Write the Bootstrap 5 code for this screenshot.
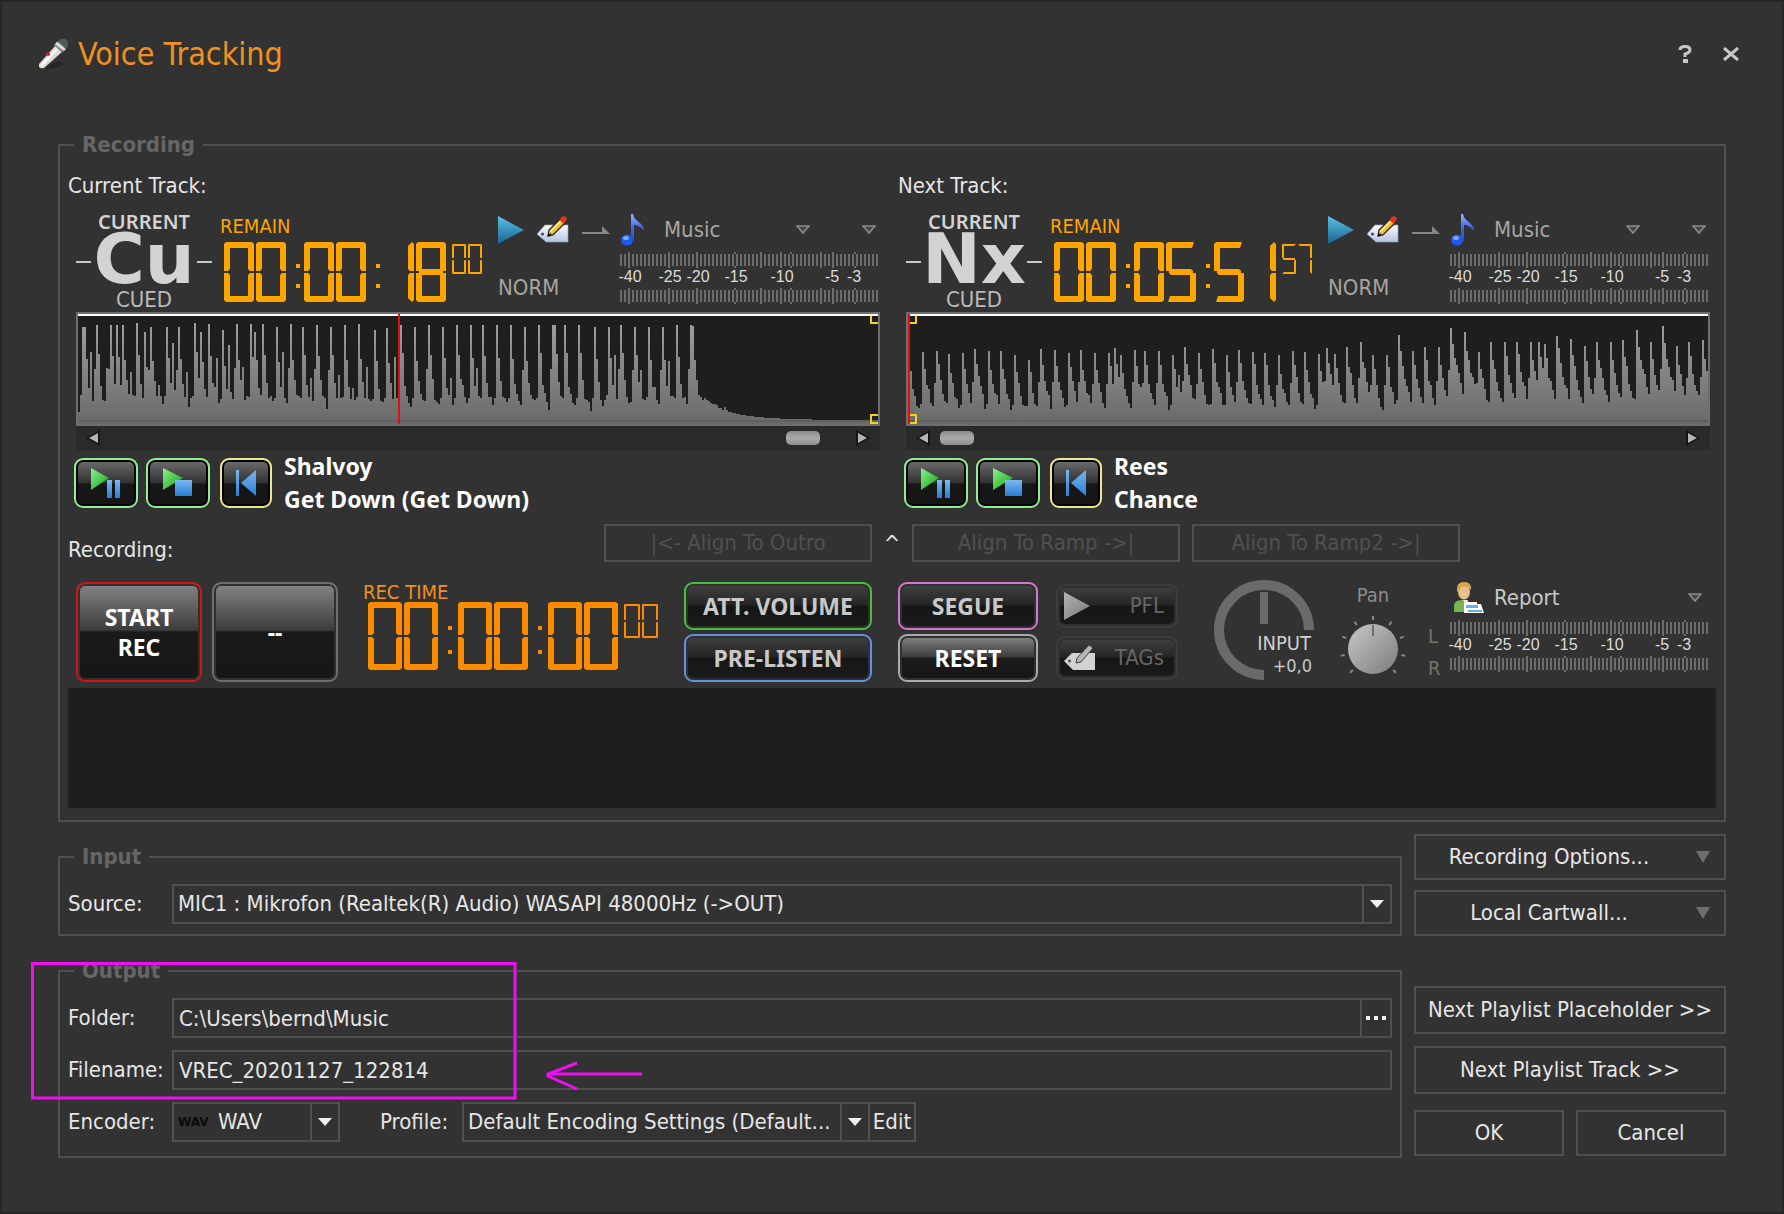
<!DOCTYPE html>
<html lang="en" data-bs-theme="dark">
<head>
<meta charset="utf-8">
<meta name="viewport" content="width=device-width, initial-scale=1">
<title>Voice Tracking</title>
<link href="https://cdn.jsdelivr.net/npm/bootstrap@5.3.0/dist/css/bootstrap.min.css" rel="stylesheet">
<style>
  :root { --line: #505050; --amber: #ffa500; --rec: #ff8c00; --ui: "DejaVu Sans Condensed", "DejaVu Sans", sans-serif; --ui-bold: "Noto Sans", "Open Sans", sans-serif; }
  body { background: #323232; color: #e6e6e6; font-family: var(--ui); font-size: 22px; line-height: 28px; }
  .window { min-height: 100vh; border: 2px solid #262626; }
  .titlebar { padding: 32px 41px 57px 36px; }
  .titlebar h1 { font-size: 32px; line-height: 40px; color: #f09020; margin: 0 0 0 8px; font-weight: 400; }
  .titlebar button { background: none; border: 0; padding: 0; width: 20px; height: 24px; line-height: 0; }
  .titlebar-tools { gap: 26px; }
  .window-body { padding: 0 56px; }
  .frame { border: 2px solid var(--line); padding: 0 8px; min-width: 0; }
  .frame legend { float: none; width: auto; margin: 0 0 0 6px; padding: 0 8px; font-size: 22px; line-height: 28px; height: 28px; font-weight: 700; color: #666; }
  .plain { background: transparent; border: 2px solid var(--line); color: #e6e6e6; border-radius: 0; padding: 0 10px; font-size: 22px; }
  .plain:disabled { color: #505050; opacity: 1; }
  /* deck */
  .decks { gap: 12px; padding-top: 13px; }
  .deck { flex: 1 1 0; min-width: 0; }
  .deck-inner { padding: 10px 6px 0 8px; }
  .deck-head { height: 102px; padding-top: 2px; }
  .slot { width: 136px; color: #d3d3d3; text-align: center; }
  .slot-top { font: 600 20px/20px var(--ui-bold); }
  .slot-id { font: 700 70px/54px "DejaVu Sans", sans-serif; height: 54px; }
  .slot-id::before, .slot-id::after { content: ""; height: 2px; width: 15px; background: #c8c8c8; margin-top: 6px; }
  .slot-state { line-height: 28px; color: #bbb; }
  .clock-label { font-size: 20px; line-height: 20px; color: var(--amber); }
  .clock { margin-left: 8px; width: 264px; padding-top: 4px; }
  .clock svg, .rec-clock svg { display: block; }
  .clock svg { fill: var(--amber); margin: 6px 0 0 4px; }
  .tools { margin-left: 14px; width: 112px; padding-top: 2px; }
  .mode { margin-top: 28px; }
  .muted { color: #a6a6a0; }
  .category { width: 260px; }
  .deck .category { padding-top: 2px; }
  .row32 { height: 32px; }
  .flat-select { appearance: none; background: transparent; border: 0; padding: 0; color: inherit; font-size: 22px; line-height: 28px; outline: 0; }
  .pick { display: grid; align-items: center; }
  .pick > * { grid-area: 1 / 1; }
  .pick > svg { justify-self: end; pointer-events: none; }
  .deck .pick { margin-left: 18px; }
  .icon-btn { background: none; border: 0; padding: 0; line-height: 0; }
  .more { margin: 0 4px 0 52px; }
  .meter { overflow: visible; }
  .wave { height: 114px; border: 2px solid #6e6e6e; background: #1e1e1e; }
  .wave svg { display: block; width: 100%; height: 110px; }
  .scroll { height: 24px; background: #2a2a2a; padding: 0 10px; }
  .thumb { width: 34px; height: 14px; border-radius: 5px; background: linear-gradient(#8a8a8a, #aaa 50%, #8a8a8a); }
  .thumb-end { margin: 0 36px 0 auto; }
  .thumb-start { margin: 0 auto 0 10px; }
  .transport { margin: 8px -2px 0; gap: 8px; }
  .glossy { border: 2px solid var(--edge, #777); border-radius: 9px; padding: 0; color: #fff; font: 700 23px/30px var(--ui-bold);
    background: linear-gradient(#858585, #3c3c3c 48%, #1a1a1a 50%, #161616); box-shadow: inset 0 0 0 2px #303030; }
  .glossy.dim { color: #c8c8c8; background: linear-gradient(#424242, #242424 48%, #161616 50%, #1a1a1a); }
  .glossy.soft { color: #666; font: 400 22px/28px var(--ui); height: 44px; margin: 2px 0; padding: 0 12px 0 6px; }
  .glossy.player { width: 64px; height: 50px; line-height: 0; background: linear-gradient(#6e6e6e, #303030 50%, #161616 52%, #161616); box-shadow: inset 0 0 0 2px #000; }
  .glossy.narrow { width: 52px; margin-left: 2px; }
  .edge-mint { --edge: #90ee90; } .edge-khaki { --edge: #f0e68c; } .edge-red { --edge: #d21414; } .edge-green { --edge: #46c03c; }
  .edge-blue { --edge: #6490dc; } .edge-pink { --edge: #d278cd; } .edge-grey { --edge: #aaa; } .edge-mid { --edge: #6e6e6e; } .edge-low { --edge: #3c3c3c; }
  .song { font: 700 23px/33px var(--ui-bold); color: #fff; margin: -8px 0 -8px 4px; }
  .align-row { margin-top: 16px; height: 38px; }
  .align-row .plain { width: 268px; height: 38px; padding: 0; }
  .align-row .caret { width: 40px; padding-top: 6px; text-align: center; }
  .align-label { width: 536px; line-height: 24px; }
  .second { margin-left: 12px; }
  .console { margin-top: 20px; height: 100px; padding: 0 6px 0 8px; }
  .big { width: 126px; height: 100px; margin-right: 10px; padding: 0 20px; }
  .rec-clock { margin: 0 26px 0 15px; width: 295px; }
  .rec-clock svg { fill: var(--rec); margin-left: 5px; }
  .rec-clock .clock-label { color: #f09020; }
  .stack { gap: 4px; }
  .stack .glossy { height: 48px; }
  .stack .glossy.soft { height: 44px; }
  .w-a { width: 188px; margin-right: 26px; } .w-b { width: 140px; margin-right: 18px; } .w-c { width: 122px; }
  .dial { margin: -4px 0 0 36px; }
  .pan { margin-left: 18px; }
  .report { width: 282px; color: #c8c8c8; }
  .channels { width: 22px; color: #74746a; font-size: 20px; line-height: 32px; padding-top: 38px; }
  .wavebox { margin-top: 6px; height: 120px; background: #1e1e1e; margin-bottom: 12px; }
  /* lower part */
  .lower { margin-top: 12px; gap: 12px; }
  .forms { padding-top: 9px; min-width: 0; }
  .frame-input { padding-bottom: 10px; }
  .fields { padding-top: 13px; gap: 12px; }
  .side { width: 312px; }
  .side .plain { height: 46px; }
  .side .tall { height: 48px; }
  .side-next { margin-top: 50px; }
  .side-row { margin-top: 12px; }
  .side-last { margin-top: 16px; gap: 12px; }
  .options { margin-top: 10px; }
  .field-label { width: 104px; }
  .combo { display: grid; border: 2px solid var(--line); height: 40px; min-width: 0; }
  .combo > * { grid-area: 1 / 1; min-width: 0; }
  .combo select { appearance: none; background: transparent; border: 0; color: #e6e6e6; padding: 0 34px 0 4px; font-size: 22px; line-height: 28px; outline: 0; text-overflow: ellipsis; }
  .combo .chev { justify-self: end; width: 28px; border-left: 2px solid var(--line); pointer-events: none; display: grid; place-items: center; }
  .combo-encoder { width: 168px; }
  .combo-encoder select { padding-left: 44px; }
  .combo-profile { width: 408px; }
  .profile-label { margin-left: 40px; width: 82px; }
  .line-input { background: transparent; border: 2px solid var(--line); height: 40px; color: #e6e6e6; padding: 0 5px; min-width: 0; outline: 0; font-size: 22px; }
  .tail { height: 40px; padding: 0; margin-left: -2px; }
  .browse { width: 32px; line-height: 0; }
  .edit { width: 48px; }
  .wav-tag { font: 700 12px/36px "DejaVu Sans", sans-serif; color: #0a0a0a; padding-left: 4px; pointer-events: none; }
  .output { position: relative; margin-top: 21px; padding-bottom: 14px; }
  .annot { position: absolute; pointer-events: none; left: -29px; top: -23px; }
</style>
</head>
<body>
<svg width="0" height="0" class="position-absolute" aria-hidden="true">
  <defs>
    <linearGradient id="gPlay" x1="0" y1="0" x2="0" y2="1"><stop offset="0" stop-color="#5cc0e8"/><stop offset="1" stop-color="#17648c"/></linearGradient>
    <linearGradient id="gGreen" x1="0" y1="0" x2="1" y2="1"><stop offset="0" stop-color="#8cf08c"/><stop offset="1" stop-color="#14a014"/></linearGradient>
    <linearGradient id="gBlue" x1="0" y1="0" x2="0" y2="1"><stop offset="0" stop-color="#7ab8f0"/><stop offset="1" stop-color="#2a7fd6"/></linearGradient>
    <linearGradient id="gTag" x1="0" y1="0" x2="0" y2="1"><stop offset="0" stop-color="#fff"/><stop offset="1" stop-color="#b4c3e0"/></linearGradient>
    <linearGradient id="gNote" x1="0" y1="0" x2="0" y2="1"><stop offset="0" stop-color="#9ab4ff"/><stop offset=".5" stop-color="#4068e0"/><stop offset="1" stop-color="#1a50e0"/></linearGradient>
    <linearGradient id="gKnob" x1="0" y1="0" x2="1" y2="1"><stop offset="0" stop-color="#c8c8c8"/><stop offset="1" stop-color="#7c7c7c"/></linearGradient>
    <linearGradient id="gGrey" x1="0" y1="0" x2="1" y2="1"><stop offset="0" stop-color="#b4b4b4"/><stop offset="1" stop-color="#787878"/></linearGradient>
    <linearGradient id="gWave" x1="0" y1="0" x2="0" y2="110" gradientUnits="userSpaceOnUse"><stop offset="0" stop-color="#a2a2a2"/><stop offset="1" stop-color="#696969"/></linearGradient>
    <symbol id="i-play" viewBox="0 0 26 28"><path d="M0 0 26 14 0 28z" fill="url(#gPlay)"/></symbol>
    <symbol id="i-tag" viewBox="0 0 32 28"><path d="M0 18 8 9H31V26H9z" fill="url(#gTag)" stroke="#8c9cc0" stroke-width=".7"/><circle cx="5.500" cy="18" r="1.500" fill="#445"/><path d="M11 20 12 14 23 3 28 7 16 19z" fill="#f0c030" stroke="#222" stroke-width="1.300"/><path d="M13 16 24 5" stroke="#fff0a0" stroke-width="1.500"/><path d="M22 4 25 1Q29-1 30 3L27 8z" fill="#e03818"/><path d="M11 20 14 18" stroke="#111" stroke-width="2"/></symbol>
    <symbol id="i-arrow" viewBox="0 0 28 10"><path d="M0 9V7H20V1L28 9z" fill="#868686"/></symbol>
    <symbol id="i-note" viewBox="0 0 24 32"><ellipse cx="6" cy="26" rx="6" ry="5.500" fill="#1f58ea"/><ellipse cx="5" cy="24" rx="3" ry="2" fill="#78a8ff"/><path d="M10 27V0H12C13 8 23 8 23 17 20 12 15 11 13 11V27z" fill="url(#gNote)"/></symbol>
    <symbol id="i-drop" viewBox="0 0 14 10"><path d="M1 1H13L7 8z" fill="#4a4a4a" stroke="#8c8c8c" stroke-width="1.500"/></symbol>
    <symbol id="i-left" viewBox="0 0 14 16"><path d="M14 0V16L0 8z" fill="#141414"/><path d="M12 3V13L3 8z" fill="#b4b4b4"/></symbol>
    <symbol id="i-right" viewBox="0 0 14 16"><path d="M0 0V16L14 8z" fill="#141414"/><path d="M2 3V13L11 8z" fill="#b4b4b4"/></symbol>
    <symbol id="i-playpause" viewBox="0 0 32 34"><path d="M1 2 19 12 1 24z" fill="url(#gGreen)"/><path d="M17 14h5v18h-5zM25 14h5v18h-5z" fill="url(#gBlue)"/></symbol>
    <symbol id="i-playstop" viewBox="0 0 32 34"><path d="M1 2 21 12 1 24z" fill="url(#gGreen)"/><path d="M13 14h17v16H13z" fill="url(#gBlue)"/></symbol>
    <symbol id="i-start" viewBox="0 0 22 26"><path d="M1 0h3v26H1zM21 0v26L6 13z" fill="url(#gBlue)"/></symbol>
    <symbol id="i-chev" viewBox="0 0 14 8"><path d="M0 0H14L7 8z" fill="#f0f0f0"/></symbol>
  </defs>
</svg>

<div class="window d-flex flex-column">
  <header class="titlebar d-flex align-items-center">
    <svg width="32" height="34" viewBox="0 0 32 34" aria-hidden="true">
      <path d="M6 31Q20 32 27 27L20 24z" fill="#1c1c1c" opacity=".6"/>
      <path d="M1 27 17 9 24 15 6 31Q3 32 1 30z" fill="#dcdcd4"/><path d="M3 29 19 12" stroke="#fff" stroke-width="2"/>
      <path d="M16 8 20 4 28 11 25 15z" fill="#9aa0a0"/><path d="M18 6 27 13" stroke="#e8e8e8" stroke-width="2"/>
      <path d="M20 4Q24 0 29 3 32 8 28 12z" fill="#50585a"/><circle cx="10" cy="17" r="2" fill="#d02020"/>
    </svg>
    <h1>Voice Tracking</h1>
    <div class="titlebar-tools d-flex ms-auto">
      <button type="button" aria-label="Help"><svg width="14" height="18" viewBox="0 0 14 18"><path d="M2 5Q2 1.500 7 1.500T12 5Q12 7.500 7 9V12" fill="none" stroke="#c8c8c8" stroke-width="3"/><path d="M5 14h5v4H5z" fill="#c8c8c8"/></svg></button>
      <button type="button" aria-label="Close"><svg width="18" height="14" viewBox="0 0 18 14"><path d="M2 1 16 13M16 1 2 13" stroke="#c8c8c8" stroke-width="3"/></svg></button>
    </div>
  </header>

  <main class="window-body">
    <fieldset class="frame">
      <legend>Recording</legend>
      <div class="decks d-flex">
        <section class="deck">
          <div>Current Track:</div>
          <div class="deck-inner">
            <div class="deck-head d-flex">
              <div class="slot">
                <div class="slot-top">CURRENT</div>
                <div class="slot-id d-flex align-items-center justify-content-between">Cu</div>
                <div class="slot-state">CUED</div>
              </div>
              <div class="clock"><div class="clock-label">REMAIN</div><svg role="img" data-seg="00:00: 1800" data-w="30" data-h="60"></svg></div>
              <div class="tools">
                <div class="row32 d-flex align-items-center">
                  <button class="icon-btn" type="button" aria-label="Play"><svg width="26" height="28"><use href="#i-play"/></svg></button>
                  <button class="icon-btn ms-auto" type="button" aria-label="Edit tags"><svg width="32" height="28"><use href="#i-tag"/></svg></button>
                  <svg class="ms-auto" width="28" height="10"><use href="#i-arrow"/></svg>
                </div>
                <div class="mode muted">NORM</div>
              </div>
              <div class="category ms-auto">
                <div class="row32 d-flex align-items-center">
                  <svg width="26" height="32"><use href="#i-note"/></svg>
                  <label class="pick flex-fill muted"><select class="flat-select w-100" aria-label="Category"><option>Music</option></select><svg width="14" height="10"><use href="#i-drop"/></svg></label>
                  <button class="icon-btn more" type="button" aria-label="More"><svg width="14" height="10"><use href="#i-drop"/></svg></button>
                </div>
                <svg class="meter d-block" width="260" height="58"></svg>
              </div>
            </div>
            <div class="wave"><svg data-wave="a" viewBox="0 0 800 110" preserveAspectRatio="none"></svg></div>
            <div class="scroll d-flex align-items-center">
              <svg width="14" height="16"><use href="#i-left"/></svg><span class="thumb thumb-end"></span><svg width="14" height="16"><use href="#i-right"/></svg>
            </div>
            <div class="transport d-flex">
              <button class="glossy player edge-mint" type="button" aria-label="Play / pause"><svg width="32" height="34"><use href="#i-playpause"/></svg></button>
              <button class="glossy player edge-mint" type="button" aria-label="Play / stop"><svg width="32" height="34"><use href="#i-playstop"/></svg></button>
              <button class="glossy player narrow edge-khaki" type="button" aria-label="Back to start"><svg width="22" height="26"><use href="#i-start"/></svg></button>
              <div class="song">Shalvoy<br>Get Down (Get Down)</div>
            </div>
          </div>
        </section>
        <section class="deck">
          <div>Next Track:</div>
          <div class="deck-inner">
            <div class="deck-head d-flex">
              <div class="slot">
                <div class="slot-top">CURRENT</div>
                <div class="slot-id d-flex align-items-center justify-content-between">Nx</div>
                <div class="slot-state">CUED</div>
              </div>
              <div class="clock"><div class="clock-label">REMAIN</div><svg role="img" data-seg="00:05:5157" data-w="30" data-h="60"></svg></div>
              <div class="tools">
                <div class="row32 d-flex align-items-center">
                  <button class="icon-btn" type="button" aria-label="Play"><svg width="26" height="28"><use href="#i-play"/></svg></button>
                  <button class="icon-btn ms-auto" type="button" aria-label="Edit tags"><svg width="32" height="28"><use href="#i-tag"/></svg></button>
                  <svg class="ms-auto" width="28" height="10"><use href="#i-arrow"/></svg>
                </div>
                <div class="mode muted">NORM</div>
              </div>
              <div class="category ms-auto">
                <div class="row32 d-flex align-items-center">
                  <svg width="26" height="32"><use href="#i-note"/></svg>
                  <label class="pick flex-fill muted"><select class="flat-select w-100" aria-label="Category"><option>Music</option></select><svg width="14" height="10"><use href="#i-drop"/></svg></label>
                  <button class="icon-btn more" type="button" aria-label="More"><svg width="14" height="10"><use href="#i-drop"/></svg></button>
                </div>
                <svg class="meter d-block" width="260" height="58"></svg>
              </div>
            </div>
            <div class="wave"><svg data-wave="b" viewBox="0 0 800 110" preserveAspectRatio="none"></svg></div>
            <div class="scroll d-flex align-items-center">
              <svg width="14" height="16"><use href="#i-left"/></svg><span class="thumb thumb-start"></span><svg width="14" height="16"><use href="#i-right"/></svg>
            </div>
            <div class="transport d-flex">
              <button class="glossy player edge-mint" type="button" aria-label="Play / pause"><svg width="32" height="34"><use href="#i-playpause"/></svg></button>
              <button class="glossy player edge-mint" type="button" aria-label="Play / stop"><svg width="32" height="34"><use href="#i-playstop"/></svg></button>
              <button class="glossy player narrow edge-khaki" type="button" aria-label="Back to start"><svg width="22" height="26"><use href="#i-start"/></svg></button>
              <div class="song">Rees<br>Chance</div>
            </div>
          </div>
        </section>
      </div>

      <div class="align-row d-flex">
        <div class="align-label align-self-end">Recording:</div>
        <button class="plain" type="button" disabled>|&lt;- Align To Outro</button>
        <div class="caret">^</div>
        <button class="plain" type="button" disabled>Align To Ramp -&gt;|</button>
        <button class="plain second" type="button" disabled>Align To Ramp2 -&gt;|</button>
      </div>

      <div class="console d-flex">
        <button class="glossy big edge-red" type="button">START REC</button>
        <button class="glossy big edge-mid" type="button">--</button>
        <div class="rec-clock"><div class="clock-label">REC TIME</div><svg role="img" data-seg="00:00:0000" data-w="34" data-h="68"></svg></div>
        <div class="stack w-a d-flex flex-column">
          <button class="glossy dim edge-green" type="button">ATT. VOLUME</button>
          <button class="glossy dim edge-blue" type="button">PRE-LISTEN</button>
        </div>
        <div class="stack w-b d-flex flex-column">
          <button class="glossy dim edge-pink" type="button">SEGUE</button>
          <button class="glossy edge-grey" type="button">RESET</button>
        </div>
        <div class="stack w-c d-flex flex-column">
          <button class="glossy dim soft edge-low d-flex align-items-center justify-content-between" type="button"><svg width="26" height="28" viewBox="0 0 26 28"><path d="M0 0 26 14 0 28z" fill="url(#gGrey)"/></svg>PFL</button>
          <button class="glossy dim soft edge-low d-flex align-items-center justify-content-between" type="button"><svg width="32" height="28" viewBox="0 0 32 28"><path d="M0 17 8 9H31V26H9z" fill="#d2d2d2"/><path d="M12 19 13 14 25 1 29 4 17 18z" fill="#b4b4b4" stroke="#444"/><circle cx="5.500" cy="17" r="1.500" fill="#555"/></svg>TAGs</button>
        </div>
        <svg class="dial" width="104" height="104" viewBox="0 0 104 104">
          <path d="M95 52A45 45 0 1 0 50 97" fill="none" stroke="#6a6a6a" stroke-width="10"/><path d="M50 14V46" stroke="#6a6a6a" stroke-width="8"/>
          <text x="97" y="72" text-anchor="end" font-size="20" fill="#d0d0d0">INPUT</text><text x="98" y="94" text-anchor="end" font-size="18" fill="#c8c8c8">+0,0</text>
        </svg>
        <svg class="pan" width="74" height="100" viewBox="0 0 74 100">
          <text x="37" y="20" text-anchor="middle" font-size="20" fill="#8c8c8c">Pan</text>
          <g id="panTicks" stroke="#8a8a8a" stroke-width="2"></g>
          <circle cx="37" cy="67" r="25" fill="url(#gKnob)"/><path d="M37 43V54" stroke="#6e6e6e" stroke-width="2"/>
        </svg>
        <div class="report ms-auto d-flex">
          <div class="channels d-flex flex-column"><span>L</span><span>R</span></div>
          <div class="category">
            <div class="row32 d-flex align-items-center">
              <svg width="36" height="32" viewBox="0 0 36 32"><path d="M4 30V24Q4 18 12 18T22 24V30z" fill="#78b450"/><path d="M13 18 16 23 18 18z" fill="#eee"/><ellipse cx="14" cy="9.500" rx="6" ry="8" fill="#e8c090"/><path d="M7 9Q6 0 14 0T21 8Q18 4 12 5 9 6 9 11z" fill="#d0a850"/><path d="M14 20H27V22H31L34 31H14z" fill="#fff"/><path d="M16 23H28V26H16zM18 28H32V30H18z" fill="#6aaee0"/></svg>
              <label class="pick flex-fill ms-2"><select class="flat-select w-100" aria-label="Report"><option>Report</option></select><svg width="14" height="10" class="me-2"><use href="#i-drop"/></svg></label>
            </div>
            <svg class="meter d-block" width="260" height="58"></svg>
          </div>
        </div>
      </div>
      <div class="wavebox"></div>
    </fieldset>

    <div class="lower d-flex">
      <div class="forms flex-fill">
        <fieldset class="frame frame-input">
          <legend>Input</legend>
          <div class="fields d-flex flex-column">
            <div class="d-flex align-items-center">
              <label class="field-label" for="src">Source:</label>
              <div class="combo flex-fill"><select id="src"><option>MIC1 : Mikrofon (Realtek(R) Audio) WASAPI 48000Hz (-&gt;OUT)</option></select><span class="chev"><svg width="14" height="8"><use href="#i-chev"/></svg></span></div>
            </div>
          </div>
        </fieldset>
        <fieldset class="frame output">
          <legend>Output</legend>
          <div class="fields d-flex flex-column">
            <div class="d-flex align-items-center">
              <label class="field-label" for="dir">Folder:</label>
              <input class="line-input flex-fill" id="dir" type="text" value="C:\Users\bernd\Music">
              <button class="plain tail browse" type="button" aria-label="Browse"><svg width="20" height="4" viewBox="0 0 20 4"><path d="M0 0h4v4H0zM8 0h4v4H8zM16 0h4v4h-4z" fill="#f0f0f0"/></svg></button>
            </div>
            <div class="d-flex align-items-center">
              <label class="field-label" for="fn">Filename:</label>
              <input class="line-input flex-fill" id="fn" type="text" value="VREC_20201127_122814">
            </div>
            <div class="d-flex align-items-center">
              <label class="field-label" for="enc">Encoder:</label>
              <div class="combo combo-encoder"><select id="enc"><option>WAV</option></select><span class="wav-tag">WAV</span><span class="chev"><svg width="14" height="8"><use href="#i-chev"/></svg></span></div>
              <label class="profile-label" for="prof">Profile:</label>
              <div class="combo combo-profile"><select id="prof"><option>Default Encoding Settings (Default...</option></select><span class="chev"><svg width="14" height="8"><use href="#i-chev"/></svg></span></div>
              <button class="plain tail edit" type="button">Edit</button>
            </div>
          </div>
          <svg class="annot" width="616" height="140" viewBox="0 0 616 140" fill="none" stroke="#ee10ee" stroke-width="3" aria-hidden="true"><path d="M1.500 1.500H484V136H1.500zM517 112H611M546 101 517 112V114L546 127"/></svg>
        </fieldset>
      </div>
      <div class="side d-flex flex-column">
        <button class="plain d-flex align-items-center" type="button"><span class="flex-fill me-4">Recording Options...</span><svg width="14" height="12" class="me-1" viewBox="0 0 14 12"><path d="M0 0H14L7 12z" fill="#6e6e6e"/></svg></button>
        <button class="plain options d-flex align-items-center" type="button"><span class="flex-fill me-4">Local Cartwall...</span><svg width="14" height="12" class="me-1" viewBox="0 0 14 12"><path d="M0 0H14L7 12z" fill="#6e6e6e"/></svg></button>
        <button class="plain tall side-next" type="button">Next Playlist Placeholder &gt;&gt;</button>
        <button class="plain tall side-row" type="button">Next Playlist Track &gt;&gt;</button>
        <div class="side-last d-flex"><button class="plain flex-fill w-50" type="button">OK</button><button class="plain flex-fill w-50" type="button">Cancel</button></div>
      </div>
    </div>
  </main>
</div>

<script src="https://cdn.jsdelivr.net/npm/bootstrap@5.3.0/dist/js/bootstrap.bundle.min.js"></script>
<script>
  const NS = 'http://www.w3.org/2000/svg';
  const add = (p, n, a) => { const e = document.createElementNS(NS, n); for (const k in a) e.setAttribute(k, a[k]); p.append(e); return e; };

  // Seven-segment read-outs: hh:mm:ss followed by half-height hundredths
  const LIT = { 0: 'abcdef', 1: 'bc', 2: 'abged', 3: 'abgcd', 4: 'fgbc', 5: 'afgcd', 6: 'afgecd', 7: 'abc', 8: 'abcdefg', 9: 'abcdfg' };
  function segments(svg, ch, x, y, w, h, t) {
    const m = h / 2, k = t / 3, q = t > 3 ? 2 : 0;
    const shape = {
      a: [[q, 0], [w - q, 0], [w - t + q, t], [t - q, t]],
      d: [[q, h], [w - q, h], [w - t + q, h - t], [t - q, h - t]],
      f: [[0, q], [q, 0], [t, t - q], [t, m - 1 - k], [t - k, m - 1], [0, m - 1]],
      b: [[w, q], [w - q, 0], [w - t, t - q], [w - t, m - 1 - k], [w - t + k, m - 1], [w, m - 1]],
      e: [[0, h - q], [q, h], [t, h - t + q], [t, m + 1 + k], [t - k, m + 1], [0, m + 1]],
      c: [[w, h - q], [w - q, h], [w - t, h - t + q], [w - t, m + 1 + k], [w - t + k, m + 1], [w, m + 1]],
      g: [[t / 2, m - 1], [t / 2 + 2, m - t / 2], [w - t / 2 - 2, m - t / 2], [w - t / 2, m - 1], [w - t / 2, m + 1], [w - t / 2 - 2, m + t / 2], [t / 2 + 2, m + t / 2], [t / 2, m + 1]]
    };
    for (const s of LIT[ch] || '') add(svg, 'polygon', { points: shape[s].map(p => (p[0] + x) + ',' + (p[1] + y)).join(' ') });
  }
  document.querySelectorAll('[data-seg]').forEach(svg => {
    const w = +svg.dataset.w, h = +svg.dataset.h, txt = svg.dataset.seg.replace(': ', ':');
    const gap = w > 30 ? 18 : 16, sw = w > 30 ? 16 : 14;
    svg.setAttribute('width', w * 6 + 12 + gap * 2 + sw * 2 + 8); svg.setAttribute('height', h);
    svg.setAttribute('aria-label', txt.slice(0, 8) + '.' + txt.slice(8));
    let x = 0;
    for (const ch of txt.slice(0, 8)) {
      if (ch === ':') { for (const y of [Math.round(h * .36), Math.round(h * .7)]) add(svg, 'rect', { x: x + 8, y: y, width: 4, height: 4 }); x += gap; }
      else { segments(svg, ch, x, 0, w, h, 6); x += w + 2; }
    }
    x += 4;
    for (const ch of txt.slice(8)) { segments(svg, ch, x, 2, sw, h / 2, 2); x += sw + 2; }
  });

  // Level scales
  document.querySelectorAll('.meter').forEach(svg => {
    const long = [2, 12, 19, 35, 40, 50, 53];
    for (const y of [6, 42]) {
      for (let i = 0; i < 65; i++) { const L = long.includes(i); add(svg, 'rect', { x: i * 4, y: L ? y : y + 2, width: 2, height: L ? 16 : 12, fill: '#6c6c6c' }); }
      for (const x of [114, 170, 234]) for (const dy of [0, 14]) add(svg, 'rect', { x: x, y: y + dy, width: 2, height: 2, fill: '#6c6c6c' });
    }
    [[10, '-40'], [50, '-25'], [78, '-20'], [116, '-15'], [162, '-10'], [212, '-5'], [234, '-3']].forEach(([x, s]) => {
      add(svg, 'text', { x: x, y: 36, 'text-anchor': 'middle', 'font-size': 16, 'font-family': 'Liberation Sans, Arial, sans-serif', fill: '#dcdcdc' }).textContent = s;
    });
  });

  // Pan scale
  for (let i = -4; i <= 4; i++) add(document.getElementById('panTicks'), 'path', { d: 'M37 38V34', transform: `rotate(${i * 34} 37 67)` });

  // Waveforms: [column, peak height]; every column is two units wide
  const WAVE = {
    a: [[2,95],[3,95],[6,70],[9,97],[14,54],[16,97],[19,97],[22,97],[26,50],[29,99],[33,90],[36,95],[40,37],[44,95],[47,79],[50,95],[54,50],[58,99],[61,90],[65,98],[69,64],[72,92],[75,77],[79,98],[82,55],[86,98],[88,90],[92,98],[99,95],[102,70],[106,98],[112,95],[116,44],[119,97],[126,95],[130,47],[133,97],[137,34],[140,98],[144,55],[148,92],[154,94],[158,65],[161,97],[168,95],[171,25],[175,97],[182,95],[186,44],[189,97],[192,37],[196,97],[199,54],[202,97],[209,97],[216,97],[223,95],[230,97],[237,97],[238,97],[243,97],[250,97],[258,95],[265,95],[268,67],[271,97],[278,95],[281,52],[285,95],[288,35],[292,95],[295,61],[299,97],[306,97],[307,96],[309,42]],
    b: [[0,65],[7,70],[14,71],[20,68],[27,69],[33,73],[40,71],[46,71],[53,67],[60,62],[66,73],[73,72],[80,69],[86,72],[93,69],[100,69],[103,74],[106,67],[113,72],[118,71],[125,71],[132,67],[135,47],[138,75],[145,69],[152,73],[159,67],[165,72],[172,70],[178,69],[185,67],[192,71],[198,70],[205,68],[209,74],[213,68],[219,75],[226,80],[232,67],[239,67],[245,87],[252,71],[258,75],[265,75],[271,94],[278,90],[285,70],[291,80],[298,80],[304,80],[311,80],[315,80],[318,78],[324,86],[331,83],[338,76],[344,80],[351,80],[357,82],[364,92],[371,80],[377,96],[384,76],[390,80],[397,82]]
  };
  const DROP = { a: [0, 28, 54, 68, 72, 77, 84, 92, 97], b: [0, 12, 26, 36, 44, 52, 62, 70, 76] };
  document.querySelectorAll('[data-wave]').forEach(svg => {
    const key = svg.dataset.wave, top = new Array(400).fill(0);
    let seed = 7; const rnd = () => (seed = (seed * 16807) % 2147483647) / 2147483647;
    for (let c = 0; c < 400; c++) {
      let v = key === 'a' ? (c < 310 ? 10 + rnd() * 18 : 22 * Math.exp(-(c - 310) / 15) + 2 + (c < 325 ? rnd() * 4 : 0)) : 10 + rnd() * 8;
      for (const [p, h] of WAVE[key]) {
        if (c >= p && c - p < 9) v = Math.max(v, h - DROP[key][c - p] * (key === 'a' && h < 80 ? 1.5 : 1) - (c > p ? rnd() * 8 : 0));
        if (c === p - 1) v = Math.max(v, h * (rnd() > .6 ? .55 : .25));
      }
      top[c] = Math.round(v);
    }
    let d = 'M0 110'; top.forEach((v, c) => d += `V${108 - v}H${c * 2 + 2}`);
    add(svg, 'path', { d: d + 'V110z', fill: 'url(#gWave)' });
    add(svg, 'rect', { x: 0, y: 106, width: 800, height: 2, fill: '#606060' });
    add(svg, 'rect', { x: 0, y: 0, width: 800, height: 2, fill: '#fff' });
    const a = key === 'a';
    add(svg, 'path', { d: a ? 'M793 2V9H800M800 101H793V109H800' : 'M1 9H8V2M1 101H8V109H1', fill: 'none', stroke: '#f0d020', 'stroke-width': 2 });
    add(svg, 'rect', { x: a ? 320 : 0, y: 0, width: 2, height: 110, fill: '#e01010' });
  });
</script>
</body>
</html>
